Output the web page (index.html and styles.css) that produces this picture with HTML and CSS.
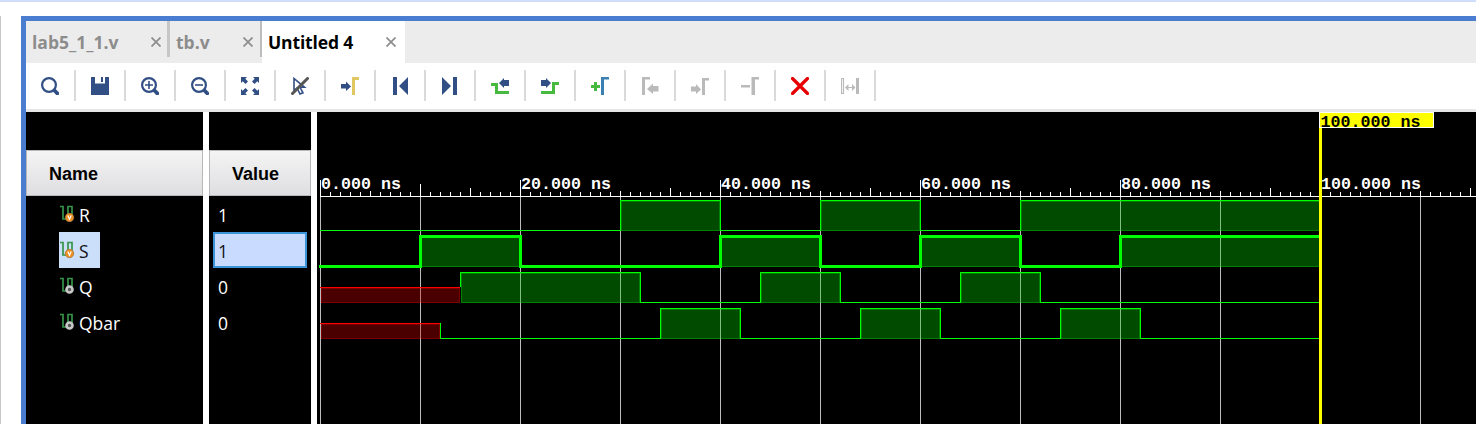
FILE: index.html
```html
<!DOCTYPE html>
<html lang="en">
<head>
<meta charset="utf-8">
<title>Waveform viewer</title>
<link rel="stylesheet" href="styles.css">
</head>
<body>
<div class="topline"></div>
<div class="workspace">
  <div class="gutter"></div>
  <main class="window">
    <nav class="tabs">
      <div class="tab tab-lab"><span>lab5_1_1.v</span><svg class="close" viewBox="0 0 10 10"><path d="M.5.5 9.5 9.5M9.5.5.5 9.5"/></svg></div>
      <div class="tab tab-tb"><span>tb.v</span><svg class="close" viewBox="0 0 10 10"><path d="M.5.5 9.5 9.5M9.5.5.5 9.5"/></svg></div>
      <div class="tab tab-active"><span>Untitled 4</span><svg class="close" viewBox="0 0 10 10"><path d="M.5.5 9.5 9.5M9.5.5.5 9.5"/></svg></div>
    </nav>
    <div class="toolbar">
      <div class="tool"><svg viewBox="0 0 18 18"><circle class="ln" cx="8" cy="8" r="6.9"/><path class="handle" d="M13.500 13.500l2.800 2.800"/></svg></div>
      <div class="tool"><svg viewBox="0 0 18 18"><path class="navy" d="M0 0h4v6.500h10V0h4v18H0zM10 0h2v5h-2z"/></svg></div>
      <div class="tool"><svg viewBox="0 0 18 18"><circle class="ln" cx="8" cy="8" r="6.9"/><path class="thin" d="M4 8h8M8 4v8"/><path class="handle" d="M13.5 13.5l2.8 2.8"/></svg></div>
      <div class="tool"><svg viewBox="0 0 18 18"><circle class="ln" cx="8" cy="8" r="6.9"/><path class="thin" d="M4 8h8"/><path class="handle" d="M13.5 13.5l2.8 2.8"/></svg></div>
      <div class="tool"><svg viewBox="0 0 18 18"><path class="navy" d="M0 0h6L4.300 1.700 7 4.500 4.500 7 1.700 4.300 0 6zM18 0v6l-1.700-1.700L13.500 7 11 4.500l2.700-2.800L12 0zM0 18v-6l1.700 1.700L4.500 11 7 13.500l-2.700 2.800L6 18zM18 18h-6l1.700-1.700L11 13.500l2.500-2.500 2.800 2.700L18 12z"/></svg></div>
      <div class="tool"><svg viewBox="0 0 18 18"><path class="thin" d="M3 1.500v12l3-2.500 3 6 3-1.200-3-5.500h4.500z"/><path class="slash" d="M1.500 16.500l15-15"/></svg></div>
      <div class="tool"><svg viewBox="0 0 18 18"><path class="navy" d="M0 7h5V4.500L10 9.500 5 14v-2.500H0z"/><path class="gold" d="M11 0h7v3h-4v15h-3z"/></svg></div>
      <div class="tool"><svg viewBox="0 0 18 18"><path class="navy" d="M2 0h4v18H2zM17 0v18L8 9z"/></svg></div>
      <div class="tool"><svg viewBox="0 0 18 18"><path class="navy" d="M12 0h4v18h-4zM1 0v18l9-9z"/></svg></div>
      <div class="tool"><svg viewBox="0 0 18 18"><path class="green" d="M0 6h7v8h11v3H4V9H0z"/><path class="navy" d="M18 3h-5V1L8 6l5 5V9h5z"/></svg></div>
      <div class="tool"><svg viewBox="0 0 18 18"><path class="green" d="M18 5h-7v9H0v3h14V8h4z"/><path class="navy" d="M0 3h5V1l5 5-5 5V9H0z"/></svg></div>
      <div class="tool"><svg viewBox="0 0 18 18"><path class="green" d="M0 8h3V5h3v3h3v3H6v3H3v-3H0z"/><path class="blue" d="M10 0h8v2.500h-5V18h-3z"/></svg></div>
      <div class="tool"><svg viewBox="0 0 18 18"><path class="grey" d="M1 0h8v2.500H4V18H1zM17.500 9H12V6.500L6 12l6 5v-2.500h5.500z"/></svg></div>
      <div class="tool"><svg viewBox="0 0 18 18"><path class="grey" d="M11 1h7v2.500h-4V18h-3zM0 9.500h5V7l5 5.500L5 17v-2.500H0z"/></svg></div>
      <div class="tool"><svg viewBox="0 0 18 18"><path class="grey" d="M10.500 0H18v2.500h-4V18h-3.500zM0 8h9v2.500H0z"/></svg></div>
      <div class="tool"><svg viewBox="0 0 18 18"><path class="red" d="M1.500 1.500l15 15M16.500 1.500l-15 15"/></svg></div>
      <div class="tool"><svg viewBox="0 0 18 18"><path class="greyln" d="M.5 1.500h2v15h-2zM5 10.500h8"/><path class="grey" d="M15 1h3v16h-3zM7.500 7v7L4 10.500zM11 7v7l3.500-3.500z"/></svg></div>
    </div>
    <div class="viewer">
      <section class="column names">
        <div class="head">Name</div>
        <div class="row"><span class="signal"><svg class="sig" viewBox="0 0 16 18"><use href="#wave"/><use href="#var"/></svg>R</span></div>
        <div class="row"><span class="signal selected"><svg class="sig" viewBox="0 0 16 18"><use href="#wave"/><use href="#var"/></svg>S</span></div>
        <div class="row"><span class="signal"><svg class="sig" viewBox="0 0 16 18"><use href="#wave"/><use href="#net"/></svg>Q</span></div>
        <div class="row"><span class="signal"><svg class="sig" viewBox="0 0 16 18"><use href="#wave"/><use href="#net"/></svg>Qbar</span></div>
      </section>
      <section class="column values">
        <div class="head">Value</div>
        <div class="row"><span class="value">1</span></div>
        <div class="row"><span class="value selected">1</span></div>
        <div class="row"><span class="value">0</span></div>
        <div class="row"><span class="value">0</span></div>
      </section>
      <svg class="plot" id="plot" viewBox="317 112 1159 312">
        <defs>
          <g id="wave"><path class="sigwave" d="M0 1.500h3v12.500h5V1.500h4v9"/></g>
          <g id="var"><circle cx="9.500" cy="12.500" r="4.200" fill="#ef8f22" stroke="#a87840" stroke-width=".8"/><path d="M7.800 10.500l1.700 3.800 1.700-3.800" fill="none" stroke="#fff" stroke-width="1.200"/></g>
          <g id="net"><circle cx="9.500" cy="12.500" r="3" fill="#555" stroke="#c8c8c8" stroke-width="2.600"/></g>
        </defs>
      </svg>
    </div>
  </main>
</div>
<script src="wave.js"></script>
</body>
</html>
```
FILE: styles.css
```css
* { box-sizing: border-box; }
body { margin: 0; width: 1476px; height: 424px; overflow: hidden; background: #fff; font-family: "Open Sans", sans-serif; display: flex; flex-direction: column; }
.topline { height: 2px; background: #cfdffb; flex: none; margin-bottom: 14px; }
.workspace { display: flex; flex: 1; min-height: 0; }
.gutter { width: 21px; border-left: 1px solid #c9c9c9; flex: none; }
.window { flex: 1; min-width: 0; border-left: 5px solid #4a7dcf; border-top: 5px solid #4a7dcf; display: flex; flex-direction: column; }
.tabs { height: 42px; display: flex; background: #ececec; flex: none; }
.tab { display: flex; justify-content: space-between; align-items: center; font: bold 17.500px/24px "Open Sans", sans-serif; color: #8c8c8c; padding: 0 9px 0 6px; }
.tab span { white-space: nowrap; }
.tab-lab { width: 144px; height: 36px; padding-top: 6px; border-right: 3px solid #c6c6c6; padding-right: 6px; }
.tab-tb { width: 92px; height: 36px; padding-top: 6px; border-right: 2px solid #bdbdbd; padding-right: 7px; }
.tab-active { width: 143px; background: #fff; color: #000; letter-spacing: -.15px; }
.close { width: 10px; height: 10px; fill: none; stroke: #8c8c8c; stroke-width: 1.700; }
.toolbar { height: 49px; flex: none; display: flex; border-top: 1px solid #fff; border-bottom: 3px solid #e6e6e6; }
.tool { width: 50px; height: 31px; margin-top: 6px; border-right: 2px solid #dadada; display: flex; align-items: center; padding: 1px 0 0 15px; }
.tool svg { width: 18px; height: 18px; flex: none; }
.navy { fill: #314f84; fill-rule: evenodd; }
.ln { fill: none; stroke: #314f84; stroke-width: 2.200; }
.thin { fill: none; stroke: #314f84; stroke-width: 1.600; }
.handle { fill: none; stroke: #314f84; stroke-width: 3.800; stroke-linecap: round; }
.slash { stroke: #555; stroke-width: 3; stroke-linecap: round; }
.gold { fill: #e0c860; }
.green { fill: #47b93e; }
.blue { fill: #3a80b2; }
.grey { fill: #bababa; }
.greyln { fill: none; stroke: #bababa; stroke-width: 1.200; }
.red { stroke: #e60000; stroke-width: 3.200; stroke-linecap: round; }
.viewer { flex: 1; min-height: 0; display: flex; background: #fff; }
.column { background: #000; color: #fff; padding-top: 38px; flex: none; }
.names { width: 177px; margin-right: 6px; }
.values { width: 102px; margin-right: 6px; }
.head { height: 46px; border: 1px solid #b8b8b8; background: linear-gradient(#f4f4f4, #dedee2); color: #000; font: bold 18px/46px "Liberation Sans", Arial, sans-serif; padding-left: 22px; }
.row { height: 36px; display: flex; font-size: 17.500px; line-height: 38px; }
.signal { margin-left: 33px; display: flex; padding-right: 11px; }
.selected { background: #cbdffb; color: #111; }
.sig { width: 16px; height: 18px; margin: 9px 3px 0 1px; flex: none; }
.sigwave { fill: none; stroke: #369447; stroke-width: 1.700; }
.value { margin-left: 4px; width: 94px; padding-left: 5px; }
.value.selected { border: 2px solid #3c94d8; line-height: 34px; padding-left: 3px; background: #c9dcff; }
.plot { width: 1159px; height: 312px; background: #000; flex: none; display: block; shape-rendering: crispEdges; }
.plot text { font: bold 16.670px "Liberation Mono", monospace; fill: #fff; }
.plot text.cursor { fill: #000; }
```
FILE: wave.js
```js
const plot = document.getElementById('plot');
const NS = 'http://www.w3.org/2000/svg';

function add(name, attrs, text) {
  const el = document.createElementNS(NS, name);
  for (const key in attrs) el.setAttribute(key, attrs[key]);
  if (text) el.textContent = text;
  plot.appendChild(el);
}
function box(x, y, width, height, fill) {
  add('rect', { x, y, width, height, fill });
}

// Signal levels: high regions, end of the undefined period
const signals = [
  { high: 200, runs: [[620, 720], [820, 920], [1020, 1320]] },
  { high: 236, runs: [[420, 520], [720, 820], [920, 1020], [1120, 1320]], thick: true },
  { high: 272, undef: 460, runs: [[460, 640], [760, 840], [960, 1040]] },
  { high: 308, undef: 440, runs: [[660, 740], [860, 940], [1060, 1140]] }
];

for (const s of signals) {
  for (const [a, b] of s.runs) {
    const left = s.undef === a ? a + 1 : a;
    box(left, s.high, b - left + 1, 31, '#008000');
    box(a + 2, s.high + 2, b - a - 3, 28, '#004b00');
  }
  if (s.undef) {
    box(321, s.high + 15, s.undef - 321, 16, '#7d0000');
    box(322, s.high + 17, s.undef - 323, 13, '#4b0000');
  }
}

// Time grid
for (let x = 320; x < 1476; x += 100) box(x, 197, 1, 227, '#bdbdbd');
for (const s of signals) {
  for (const [a, b] of s.runs)
    for (let x = 320; x < 1320; x += 100)
      if (x > a && x < b) box(x, s.high, 1, 31, '#80c080');
  if (s.undef) box(420, s.high + 15, 1, 16, '#c08080');
}

// Traces
for (const s of signals) {
  const low = s.high + 30;
  let d = s.undef ? `M${s.undef + .5} ${s.high + 15}` : `M${s.thick ? 319 : 320} ${low + .5}`;
  if (s.undef && s.runs[0][0] !== s.undef) d += `V${low + .5}`;
  for (const [a, b] of s.runs) {
    d += `H${a + .5}V${s.high + .5}H${b === 1320 ? b : b + .5}`;
    if (b !== 1320) d += `V${low + .5}`;
  }
  if (s.runs.at(-1)[1] !== 1320) d += 'H1320';
  add('path', { d, fill: 'none', stroke: '#00ff00', 'stroke-width': s.thick ? 3 : 1 });
  if (s.undef) box(320, s.high + 15, s.undef - 320, 1, '#ff0000');
}

// Ruler
box(320, 196, 1156, 1, '#fff');
for (let x = 320; x < 1476; x += 10) {
  const offset = (x - 320) % 200;
  let top = 192;
  if (offset === 0) top = 180;
  else if (x === 420) top = 184;
  else if (offset === 150) top = 188;
  else if (offset === 50 || offset === 100) top = 191;
  box(x, top, 1, 196 - top, '#fff');
}
for (let i = 0; i <= 5; i++) {
  add('text', { x: 321 + i * 200, y: 189 }, `${i * 20}.000 ns`);
}

// Cursor
box(1319, 112, 3, 312, '#ffff00');
box(1319, 112, 115, 16, '#fff');
box(1320, 113, 113, 14, '#ffff00');
add('text', { x: 1320.5, y: 127, class: 'cursor' }, '100.000 ns');
```
